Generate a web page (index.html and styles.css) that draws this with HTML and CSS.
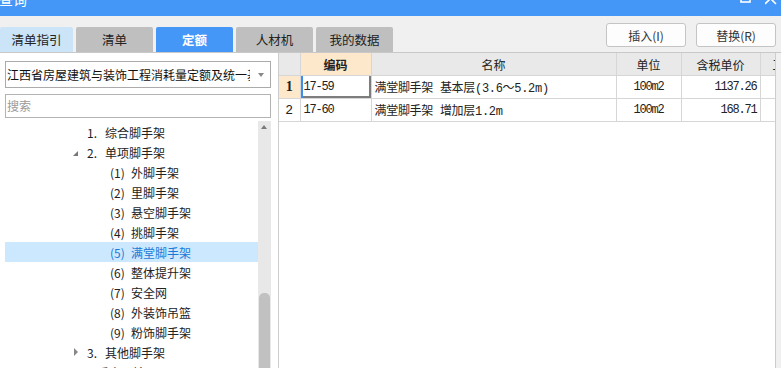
FILE: index.html
```html
<!DOCTYPE html>
<html lang="zh-CN">
<head>
    <meta charset="UTF-8">
    <meta name="viewport" content="width=device-width, initial-scale=1.0">
    <title>查询</title>
    <link rel="stylesheet" href="styles.css">
</head>
<body>
    <div class="window">
        <div class="titlebar">
            <span class="title">查询</span>
            <span class="win-btns">
                <svg class="win-icon" width="12" height="16" viewBox="0 0 12 16"><rect x="1" y="-8" width="9" height="10" fill="none" stroke="#fff" stroke-width="1.6"/></svg>
                <svg class="win-icon" width="12" height="16" viewBox="0 0 12 16"><path d="M0 -7 L11 4 M11 -7 L0 4" stroke="#fff" stroke-width="1.6"/></svg>
            </span>
        </div>

        <div class="toolbar">
            <div class="tabs">
                <div class="tab tab-guide">清单指引</div>
                <div class="tab">清单</div>
                <div class="tab active">定额</div>
                <div class="tab">人材机</div>
                <div class="tab">我的数据</div>
            </div>
            <div class="actions">
                <button class="btn">插入(I)</button>
                <button class="btn">替换(R)</button>
            </div>
        </div>

        <div class="main">
            <div class="side">
                <div class="select">
                    <span class="select-text">江西省房屋建筑与装饰工程消耗量定额及统一基价表(2017)</span>
                    <span class="caret"></span>
                </div>
                <div class="search">搜索</div>
                <div class="tree">
                    <ul class="tree-list">
                        <li class="node lv1"><span class="tog"></span><span class="no">1.</span>综合脚手架</li>
                        <li class="node lv1"><span class="tog open"></span><span class="no">2.</span>单项脚手架</li>
                        <li class="node lv2"><span class="no">(1)</span>外脚手架</li>
                        <li class="node lv2"><span class="no">(2)</span>里脚手架</li>
                        <li class="node lv2"><span class="no">(3)</span>悬空脚手架</li>
                        <li class="node lv2"><span class="no">(4)</span>挑脚手架</li>
                        <li class="node lv2 selected"><span class="no">(5)</span>满堂脚手架</li>
                        <li class="node lv2"><span class="no">(6)</span>整体提升架</li>
                        <li class="node lv2"><span class="no">(7)</span>安全网</li>
                        <li class="node lv2"><span class="no">(8)</span>外装饰吊篮</li>
                        <li class="node lv2"><span class="no">(9)</span>粉饰脚手架</li>
                        <li class="node lv1"><span class="tog closed"></span><span class="no">3.</span>其他脚手架</li>
                        <li class="node lv0">垂直运输</li>
                    </ul>
                    <div class="vscroll">
                        <span class="up"></span>
                        <span class="thumb"></span>
                    </div>
                </div>
            </div>

            <div class="grid-wrap">
                <div class="grid">
                    <table class="quota">
                        <colgroup>
                            <col class="c-rh"><col class="c-code"><col class="c-name"><col class="c-unit"><col class="c-price"><col class="c-more">
                        </colgroup>
                        <tr class="head">
                            <th class="rh"></th>
                            <th class="sel-col">编码</th>
                            <th>名称</th>
                            <th>单位</th>
                            <th>含税单价</th>
                            <th>工料机</th>
                        </tr>
                        <tr>
                            <td class="rh cur">1</td>
                            <td class="mono focus">17-59</td>
                            <td class="name">满堂脚手架 基本层(3.6～5.2m)</td>
                            <td class="mono center">100m2</td>
                            <td class="mono right">1137.26</td>
                            <td></td>
                        </tr>
                        <tr>
                            <td class="rh">2</td>
                            <td class="mono">17-60</td>
                            <td class="name">满堂脚手架 增加层1.2m</td>
                            <td class="mono center">100m2</td>
                            <td class="mono right">168.71</td>
                            <td></td>
                        </tr>
                    </table>
                </div>
            </div>
        </div>
    </div>
</body>
</html>
```

FILE: styles.css
```css
html, body {
    margin: 0;
    height: 100%;
}
body {
    font-family: "Noto Sans CJK SC", "Microsoft YaHei", sans-serif;
    font-size: 12px;
    color: #222;
    background: #f0f0f0;
    overflow: hidden;
}
.window {
    display: flex;
    flex-direction: column;
    height: 100vh;
}

/* Title bar, only the lower half is in view */
.titlebar {
    display: flex;
    justify-content: space-between;
    height: 16px;
    background: #4597f7;
    color: #fff;
    overflow: hidden;
    flex: none;
}
.title {
    font-size: 14px;
    line-height: 16px;
    margin-top: -9px;
    margin-left: -1px;
}
.win-btns {
    display: flex;
    gap: 13px;
    padding-right: 4px;
}
.win-icon {
    display: block;
}

/* Tabs + action buttons */
.toolbar {
    display: flex;
    height: 36px;
    border-bottom: 1px solid #c8c8c8;
    flex: none;
}
.tabs {
    display: flex;
    align-self: flex-end;
    gap: 3px;
}
.tab {
    width: 77px;
    height: 25px;
    line-height: 25px;
    text-align: center;
    background: #bfbfbf;
    color: #222;
    font-size: 12.5px;
    border-radius: 2px 2px 0 0;
}
.tab-guide {
    width: 73px;
    background: #cce4f7;
}
.tab.active {
    background: #4597f7;
    color: #fff;
    font-weight: 700;
}
.actions {
    display: flex;
    gap: 10px;
    margin-left: auto;
    margin-top: 7px;
    padding-right: 5px;
    align-self: flex-start;
}
.btn {
    width: 80px;
    height: 24px;
    background: #fdfdfd;
    border: 1px solid #c4c4c4;
    border-radius: 3px;
    font-family: inherit;
    font-size: 12px;
    color: #333;
    padding: 0;
}

.main {
    display: flex;
    flex: 1;
    min-height: 0;
}

/* Left side: book select, search, chapter tree */
.side {
    display: flex;
    flex-direction: column;
    width: 278px;
    flex: none;
    box-sizing: border-box;
    padding: 8px 7px 0 5px;
    background: #fff;
}
.select {
    display: flex;
    align-items: center;
    height: 27px;
    box-sizing: border-box;
    border: 1px solid #ababab;
    padding: 0 6px 0 1px;
}
.select-text {
    flex: 1;
    overflow: hidden;
    white-space: nowrap;
    color: #111;
}
.caret {
    width: 0;
    height: 0;
    margin-left: 8px;
    border-left: 3px solid transparent;
    border-right: 3px solid transparent;
    border-top: 4px solid #888;
}
.search {
    height: 24px;
    line-height: 22px;
    box-sizing: border-box;
    margin-top: 6px;
    border: 1px solid #b3b3b3;
    padding-left: 1px;
    color: #9a9a9a;
}
.tree {
    display: flex;
    flex: 1;
    min-height: 0;
    margin-top: 3px;
    overflow: hidden;
}
.tree-list {
    flex: 1;
    list-style: none;
    margin: 0;
    padding: 1px 0 0;
}
.node {
    display: flex;
    align-items: center;
    height: 20px;
    white-space: nowrap;
}
.node.lv0 {
    padding-left: 92px;
}
.node.lv1 {
    padding-left: 66px;
}
.node.lv2 {
    padding-left: 105px;
}
.node .tog {
    width: 16px;
    height: 20px;
    position: relative;
}
.tog.open::after {
    content: "";
    position: absolute;
    left: 2px;
    top: 9px;
    border-left: 5px solid transparent;
    border-bottom: 5px solid #777;
}
.tog.closed::after {
    content: "";
    position: absolute;
    left: 3px;
    top: 6px;
    border-top: 4px solid transparent;
    border-bottom: 4px solid transparent;
    border-left: 4px solid #888;
}
.lv1 .no {
    width: 18px;
}
.lv2 .no {
    width: 21px;
}
.node.selected {
    background: #cce8ff;
    color: #1a78d6;
}
.vscroll {
    position: relative;
    width: 13px;
    flex: none;
    background: #e8e8e8;
}
.vscroll .up {
    position: absolute;
    left: 3px;
    top: 4px;
    border-left: 3px solid transparent;
    border-right: 3px solid transparent;
    border-bottom: 4px solid #7a7a7a;
}
.vscroll .thumb {
    position: absolute;
    left: 1px;
    right: 1px;
    top: 172px;
    bottom: -20px;
    background: #c1c1c1;
    border-radius: 5px 5px 0 0;
}

/* Right side: quota grid */
.grid-wrap {
    flex: 1;
    padding-right: 5px;
    min-width: 0;
}
.grid {
    height: 100%;
    background: #fff;
    border-left: 1px solid #cdcdcd;
    border-right: 1px solid #cdcdcd;
    overflow: hidden;
}
.quota {
    border-collapse: collapse;
    table-layout: fixed;
    width: 542px;
}
.c-rh { width: 21px; }
.c-code { width: 71px; }
.c-name { width: 245px; }
.c-unit { width: 65px; }
.c-price { width: 79px; }
.c-more { width: 61px; }
.quota th,
.quota td {
    height: 22px;
    padding: 0 3px;
    border: 1px solid #d6d6d6;
    white-space: nowrap;
    overflow: hidden;
}
.quota th {
    border-top: none;
    background: #e9e9e9;
    font-weight: 400;
    color: #222;
}
.quota tr > :first-child {
    border-left: none;
}
.quota th.sel-col {
    background: #fde8cc;
    font-weight: 700;
}
.quota .rh {
    text-align: center;
    padding: 0;
    font-family: "Liberation Mono", monospace;
    font-size: 13px;
}
.quota td.rh.cur {
    background: #fde8cc;
    font-family: "Liberation Serif", serif;
    font-weight: 700;
    font-size: 14px;
}
.mono {
    font-family: "Liberation Mono", monospace;
    font-size: 12px;
    letter-spacing: -1.2px;
}
.name {
    font-family: "Liberation Mono", "Noto Sans CJK SC", monospace;
    font-size: 12px;
    letter-spacing: -0.3px;
}
.center {
    text-align: center;
}
.right {
    text-align: right;
}
.quota td.focus {
    box-shadow: inset 2px 0 0 #3c8ee8, inset -2px -2px 0 #7d7d7d;
}
```
